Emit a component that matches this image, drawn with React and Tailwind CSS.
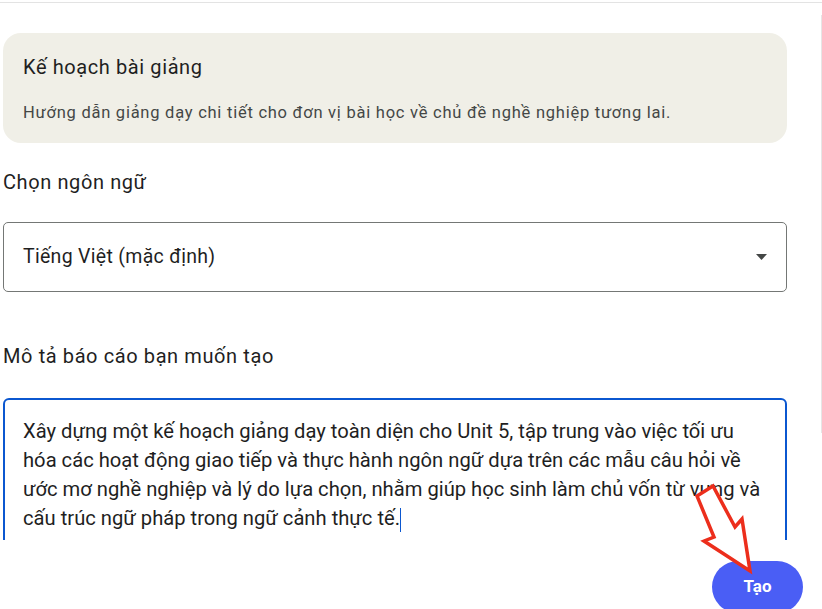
const font = { fontFamily: 'Roboto, "Noto Sans", sans-serif' };

// lines of the prompt as they wrap in the textarea
const promptLines = [
  'Xây dựng một kế hoạch giảng dạy toàn diện cho Unit 5, tập trung vào việc tối ưu',
  'hóa các hoạt động giao tiếp và thực hành ngôn ngữ dựa trên các mẫu câu hỏi về',
  'ước mơ nghề nghiệp và lý do lựa chọn, nhằm giúp học sinh làm chủ vốn từ vựng và',
  'cấu trúc ngữ pháp trong ngữ cảnh thực tế.',
];

function RedArrow() {
  return (
    <svg
      className="absolute left-[690px] top-[480px] pointer-events-none"
      width="70"
      height="100"
      viewBox="0 0 70 100"
    >
      <polygon
        points="7,16 23,6 45,47 52,39 60,91 14,61 24,57"
        fill="white"
        stroke="#ec2e1c"
        strokeWidth="3.5"
        strokeLinejoin="miter"
      />
    </svg>
  );
}

export default function App() {
  return (
    <div className="relative w-[822px] h-[609px] overflow-hidden bg-white text-[#1f1f1f]" style={font}>
      <div className="h-[2px]" />
      <div className="flex border-t border-[#e3e3e3]">
        {/* Main form column */}
        <div className="w-[787px] pl-[3px] pt-[30px]">
          {/* Template card */}
          <div className="h-[110px] rounded-[18px] bg-[#f0efe7] px-[20px] pt-[20px]">
            <h2 className="text-[20px] leading-[28px] tracking-[0.6px]">Kế hoạch bài giảng</h2>
            <p className="mt-[21px] text-[16.5px] leading-[22px] tracking-[0.75px] text-[#444746]">
              Hướng dẫn giảng dạy chi tiết cho đơn vị bài học về chủ đề nghề nghiệp tương lai.
            </p>
          </div>

          {/* Language select */}
          <label className="block mt-[27px] text-[20px] leading-[24px] tracking-[0.6px]">Chọn ngôn ngữ</label>
          <div className="mt-[28px] h-[70px] flex items-center justify-between rounded-[5px] border border-[#747775] pl-[19px] pr-[19px]">
            <span className="text-[19.5px] tracking-[0.3px]">Tiếng Việt (mặc định)</span>
            <svg width="11" height="6" viewBox="0 0 11 6">
              <path d="M0 0h11L5.5 6z" fill="#444746" />
            </svg>
          </div>

          {/* Description */}
          <label className="block mt-[52px] text-[20px] leading-[24px] tracking-[0.6px]">Mô tả báo cáo bạn muốn tạo</label>
          <div className="mt-[30px] h-[142px] overflow-hidden">
            <div className="rounded-t-[6px] border-2 border-[#0b57d0] pl-[18px] pr-[4px] pt-[17px] pb-[18px] h-[190px]">
              <div className="text-[20.2px] leading-[29px] text-[#1f1f1f]">
                {promptLines.map((line, i) => (
                  <div key={i} className="whitespace-nowrap">
                    {line}
                    {i === promptLines.length - 1 && (
                      <span className="inline-block w-px h-[24px] bg-[#0b57d0] align-middle" />
                    )}
                  </div>
                ))}
              </div>
            </div>
          </div>

          {/* Submit */}
          <div className="flex justify-end mt-[21px]">
            <button className="-mr-[16px] h-[52px] w-[91px] rounded-full bg-[#4a5ef5] text-white text-[17px] font-bold">
              Tạo
            </button>
          </div>
        </div>

        {/* Right edge of neighbouring panel */}
        <div className="ml-auto mt-[12px] h-[418px] w-px bg-[#e6e6e6]" />
      </div>

      <RedArrow />
    </div>
  );
}
